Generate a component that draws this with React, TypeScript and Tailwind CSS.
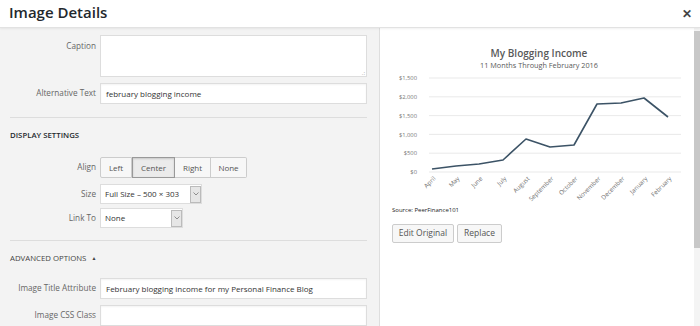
import React from "react";

const months = [
  "April",
  "May",
  "June",
  "July",
  "August",
  "September",
  "October",
  "November",
  "December",
  "January",
  "February",
];

const points: [number, number][] = [
  [52, 141],
  [76, 138],
  [99, 136],
  [123, 132],
  [146, 111],
  [170, 119],
  [194, 117],
  [217, 76],
  [241, 75],
  [264, 70],
  [288, 89],
];

const yTicks = [
  { label: "$1,500", y: 50 },
  { label: "$2,000", y: 68.8 },
  { label: "$1,500", y: 87.6 },
  { label: "$1,000", y: 106.4 },
  { label: "$500", y: 125.2 },
  { label: "$0", y: 144 },
];

function Chart() {
  return (
    <svg width="313" height="178" viewBox="0 0 313 178" className="block">
      <text x="159" y="29" textAnchor="middle" fontSize="10" fontWeight="600" fill="#595959" fontFamily="'Open Sans', sans-serif">
        My Blogging Income
      </text>
      <text x="159" y="40" textAnchor="middle" fontSize="7.3" fill="#595959" fontFamily="'Open Sans', sans-serif">
        11 Months Through February 2016
      </text>
      {yTicks.map((t, i) => (
        <g key={i}>
          <line x1="49" x2="301" y1={t.y} y2={t.y} stroke="#e3e3e3" strokeWidth="0.8" />
          <text x="37" y={t.y + 2.2} textAnchor="end" fontSize="5.8" fill="#777" fontFamily="'Open Sans', sans-serif">
            {t.label}
          </text>
        </g>
      ))}
      <polyline
        points={points.map((p) => p.join(",")).join(" ")}
        fill="none"
        stroke="#3c5366"
        strokeWidth="1.6"
        strokeLinejoin="round"
      />
      {months.map((m, i) => (
        <text
          key={m}
          x={points[i][0] + 4}
          y={151}
          textAnchor="end"
          fontSize="6.2"
          fill="#6f6f6f"
          fontFamily="'Open Sans', sans-serif"
          transform={`rotate(-45 ${points[i][0] + 4} 151)`}
        >
          {m}
        </text>
      ))}
    </svg>
  );
}

function Label({ children, top }: { children: React.ReactNode; top?: boolean }) {
  return (
    <div className={`w-[100px] shrink-0 pr-[4px] text-right text-[8.2px] text-[#666] whitespace-nowrap ${top ? "pt-[5px]" : ""}`}>
      {children}
    </div>
  );
}

function TextInput({ value }: { value?: string }) {
  return (
    <div className="w-[267px] h-[21px] bg-white border border-[#dddddd] shadow-[inset_0_1px_2px_rgba(0,0,0,0.05)] px-[5px] flex items-center text-[8px] text-[#333] whitespace-nowrap">
      {value}
    </div>
  );
}

function Select({ value, width }: { value: string; width: string }) {
  return (
    <div className={`${width} h-[20px] bg-white border border-[#dddddd] flex items-center text-[8px] text-[#333] whitespace-nowrap`}>
      <span className="flex-1 pl-[4px]">{value}</span>
      <span className="w-[11px] h-[17px] bg-[#e6e6e6] border border-[#bbb] flex items-center justify-center">
        <svg width="6" height="4" viewBox="0 0 6 4">
          <path d="M0.5 0.5 L3 3 L5.5 0.5" fill="none" stroke="#777" strokeWidth="0.8" />
        </svg>
      </span>
    </div>
  );
}

export default function App() {
  return (
    <div className="w-[700px] h-[326px] overflow-hidden flex flex-col bg-white font-['Open_Sans',sans-serif]">
      <div className="h-[28px] shrink-0 flex items-center justify-between pl-[9px] pr-[8px] border-b border-[#e2e2e2] shadow-[0_1px_2px_rgba(0,0,0,0.06)] relative z-10">
        <h1 className="text-[15px] font-semibold text-[#23282d] leading-none -mt-[2px]">Image Details</h1>
        <span className="text-[12px] font-bold text-[#444] leading-none">✕</span>
      </div>
      <div className="flex flex-1 min-h-0">
        <div className="w-[380px] shrink-0 bg-[#f3f3f3] border-r border-[#dedede] flex flex-col">
          <div className="flex mt-[7px]">
            <Label top>Caption</Label>
            <div className="w-[267px] h-[42px] bg-white border border-[#dddddd] relative">
              <span className="absolute right-[1px] bottom-[0px] text-[6px] leading-none text-[#999]">.:</span>
            </div>
          </div>
          <div className="flex items-center mt-[6px]">
            <Label>Alternative Text</Label>
            <TextInput value="february blogging income" />
          </div>
          <div className="ml-[10px] w-[357px] h-px bg-[#dddddd] mt-[13px]" />
          <div className="ml-[10px] mt-[11px] h-[12px] leading-[12px] text-[7.8px] font-semibold text-[#23282d] uppercase">
            Display Settings
          </div>
          <div className="flex items-center mt-[16px]">
            <Label>Align</Label>
            <div className="flex h-[21px] text-[8px] text-[#555]">
              <span className="w-[32px] flex items-center justify-center bg-[#f7f7f7] border border-[#cccccc] rounded-l-[2px]">Left</span>
              <span className="w-[43px] flex items-center justify-center bg-[#ebebeb] border border-[#999] shadow-[inset_0_1px_2px_rgba(0,0,0,0.15)]">Center</span>
              <span className="w-[36px] flex items-center justify-center bg-[#f7f7f7] border border-[#cccccc] border-l-0">Right</span>
              <span className="w-[36px] flex items-center justify-center bg-[#f7f7f7] border border-[#cccccc] border-l-0 rounded-r-[2px]">None</span>
            </div>
          </div>
          <div className="flex items-center mt-[6px]">
            <Label>Size</Label>
            <Select value="Full Size – 500 × 303" width="w-[102px]" />
          </div>
          <div className="flex items-center mt-[4px]">
            <Label>Link To</Label>
            <Select value="None" width="w-[83px]" />
          </div>
          <div className="ml-[10px] w-[357px] h-px bg-[#dddddd] mt-[12px]" />
          <div className="ml-[10px] mt-[11px] h-[12px] leading-[12px] text-[7.8px] text-[#444] uppercase flex items-center gap-[5px]">
            <span>Advanced Options</span>
            <span className="text-[5px]">▲</span>
          </div>
          <div className="flex items-center mt-[14px]">
            <Label>Image Title Attribute</Label>
            <TextInput value="February blogging income for my Personal Finance Blog" />
          </div>
          <div className="flex items-center mt-[6px]">
            <Label>Image CSS Class</Label>
            <TextInput />
          </div>
        </div>
        <div className="flex-1 bg-white flex flex-col">
          <Chart />
          <div className="pl-[12px] text-[6px] leading-[8px] text-[#222]">Source: PeerFinance101</div>
          <div className="pl-[12px] mt-[10px] flex gap-[3px]">
            <span className="h-[19px] w-[62px] flex items-center justify-center border border-[#cccccc] bg-[#f7f7f7] rounded-[2px] text-[8.5px] text-[#555]">Edit Original</span>
            <span className="h-[19px] w-[45px] flex items-center justify-center border border-[#cccccc] bg-[#f7f7f7] rounded-[2px] text-[8.5px] text-[#555]">Replace</span>
          </div>
        </div>
        <div className="w-[6px] shrink-0 bg-[#f4f4f4] flex flex-col pt-[3px]">
          <div className="h-[217px] bg-[#c8c8c8]" />
        </div>
      </div>
    </div>
  );
}
